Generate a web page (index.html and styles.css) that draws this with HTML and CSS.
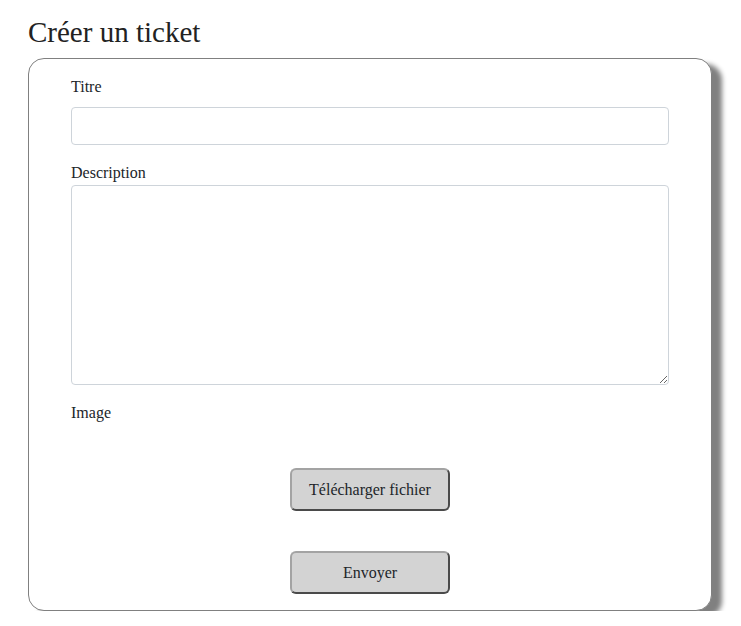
FILE: index.html
```html
<!DOCTYPE html>
<html lang="fr">
<head>
<meta charset="utf-8">
<title>Créer un ticket</title>
<link rel="stylesheet" href="styles.css">
</head>
<body>
<main class="page">
  <h1 class="title">Créer un ticket</h1>
  <form class="card">
    <label class="label label-titre" for="titre">Titre</label>
    <input class="field" id="titre" type="text">
    <label class="label label-desc" for="desc">Description</label>
    <textarea class="field area" id="desc"></textarea>
    <label class="label label-image">Image</label>
    <div class="actions">
      <button type="button" class="btn">Télécharger fichier</button>
      <button type="submit" class="btn">Envoyer</button>
    </div>
  </form>
</main>
</body>
</html>
```
FILE: styles.css
```css
* { box-sizing: border-box; }
html, body { margin: 0; padding: 0; background: #fff; }
body {
  font-family: "Liberation Serif", "Times New Roman", serif;
  color: #212529;
  font-size: 16px;
}
.page {
  width: 741px;
  padding: 15px 29px 0 28px;
}
.title {
  margin: 0 0 9px;
  font-size: 29px;
  line-height: 34px;
  font-weight: normal;
  color: #222;
}
.card {
  display: flex;
  flex-direction: column;
  width: 684px;
  border: 1px solid #808080;
  border-radius: 16px;
  box-shadow: 10px 6px 5px #808080;
  padding: 19px 42px 16px;
  background: #fff;
}
.label {
  display: block;
  line-height: 18px;
}
.label-titre { margin-bottom: 11px; }
.label-desc { margin-top: 19px; margin-bottom: 3px; }
.label-image { margin-top: 19px; }
.field {
  display: block;
  width: 598px;
  height: 38px;
  border: 1px solid #ced4da;
  border-radius: 4px;
  font: inherit;
  padding: 6px 12px;
  background: #fff;
}
.area {
  height: 200px;
  resize: vertical;
}
.actions {
  display: flex;
  flex-direction: column;
  align-items: center;
  gap: 40px;
  margin-top: 46px;
}
.btn {
  width: 160px;
  height: 43px;
  background: #d3d3d3;
  border: 2px solid;
  border-color: #a3a3a3 #4a4a4a #4a4a4a #a3a3a3;
  border-radius: 6px;
  font-family: "Liberation Serif", "Times New Roman", serif;
  font-size: 16px;
  color: #212529;
  padding: 0;
}
```
